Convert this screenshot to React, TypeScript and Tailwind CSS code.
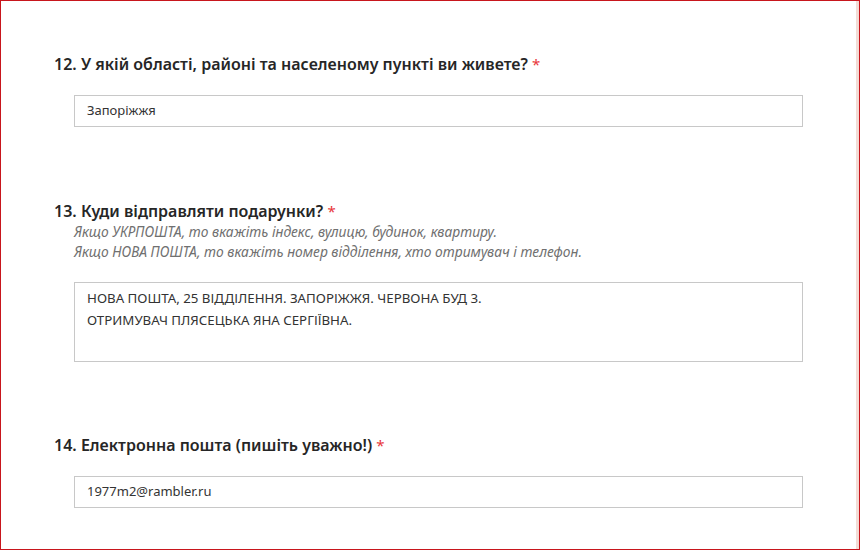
const font = { fontFamily: '"Noto Sans", "Open Sans", sans-serif' };

function Label({ num, text }: { num: string; text: string }) {
  return (
    <h3 className="text-[16px] font-semibold leading-[22px] text-[#262626]">
      {num}. {text} <span className="font-normal text-[15px] text-[#e8363a]">*</span>
    </h3>
  );
}

export default function App() {
  return (
    <div
      className="w-[860px] h-[550px] bg-white border border-[#c8161d] overflow-hidden"
      style={font}
    >
      <div className="h-full border-r-[3px] border-[#f3dcd6] pl-[53px] pr-[53px] pt-[52px]">
        {/* Question 12 */}
        <div>
          <Label num="12" text="У якій області, районі та населеному пункті ви живете?" />
          <div className="ml-[20px] mt-[20px] h-[32px] border border-[#c8c8c8] flex items-center px-[12px] text-[13px] text-[#333]">
            Запоріжжя
          </div>
        </div>

        {/* Question 13 */}
        <div className="mt-[73px]">
          <Label num="13" text="Куди відправляти подарунки?" />
          <div className="ml-[20px] text-[13.8px] italic leading-[20px] text-[#707070]">
            <p>Якщо УКРПОШТА, то вкажіть індекс, вулицю, будинок, квартиру.</p>
            <p>Якщо НОВА ПОШТА, то вкажіть номер відділення, хто отримувач і телефон.</p>
          </div>
          <div className="ml-[20px] mt-[20px] h-[80px] border border-[#c8c8c8] px-[12px] pt-[4px] text-[13.3px] leading-[22px] text-[#333]">
            <p>НОВА ПОШТА, 25 ВІДДІЛЕННЯ. ЗАПОРІЖЖЯ. ЧЕРВОНА БУД 3.</p>
            <p>ОТРИМУВАЧ ПЛЯСЕЦЬКА ЯНА СЕРГІЇВНА.</p>
          </div>
        </div>

        {/* Question 14 */}
        <div className="mt-[72px]">
          <Label num="14" text="Електронна пошта (пишіть уважно!)" />
          <div className="ml-[20px] mt-[20px] h-[32px] border border-[#c8c8c8] flex items-center px-[12px] text-[13px] text-[#333]">
            1977m2@rambler.ru
          </div>
        </div>
      </div>
    </div>
  );
}
